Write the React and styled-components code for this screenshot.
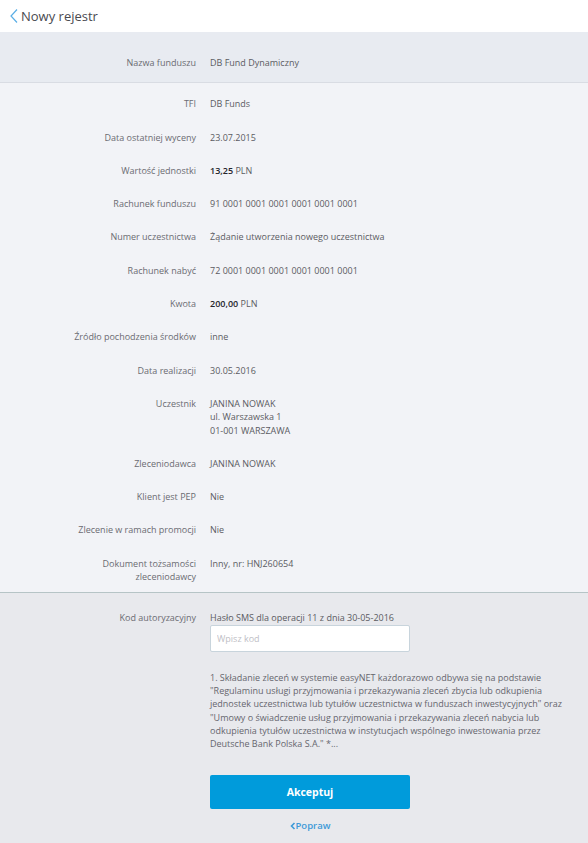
import React from "react";
import styled, { createGlobalStyle } from "styled-components";

const Global = createGlobalStyle`
  html, body { margin: 0; padding: 0; background: #e8e9ed; }
  body { font-family: "Open Sans", "Noto Sans", sans-serif; -webkit-font-smoothing: antialiased; }
  * { box-sizing: border-box; }
`;

const Page = styled.div`
  width: 588px;
  min-height: 843px;
  display: flex;
  flex-direction: column;
  background: #e8e9ed;
`;

const Header = styled.header`
  height: 32px;
  background: #ffffff;
  display: flex;
  align-items: center;
  padding-left: 9px;
  gap: 2px;
`;

const BackIcon = styled.svg`
  width: 10px;
  height: 16px;
  flex-shrink: 0;
`;

const Title = styled.h1`
  margin: 0;
  font-size: 13px;
  font-weight: 400;
  color: #4a4a50;
`;

const Section = styled.section`
  background: ${(p) => p.$bg};
  border-bottom: ${(p) => (p.$border ? `1px solid ${p.$border}` : "none")};
  padding: ${(p) => p.$pad};
  display: flex;
  flex-direction: column;
  gap: 20px;
`;

const Row = styled.div`
  display: grid;
  grid-template-columns: 196px 1fr;
  column-gap: 14px;
  font-size: 9px;
  line-height: 13.3px;
`;

const Label = styled.div`
  text-align: right;
  color: #6b6b72;
  padding-left: 40px;
`;

const Value = styled.div`
  color: #5b5b62;
  padding-right: 20px;
`;

const Strong = styled.span`
  color: #25252b;
  font-weight: 600;
`;

const Field = styled.div`
  display: flex;
  flex-direction: column;
`;

const Input = styled.input`
  width: 200px;
  height: 27px;
  border: 1px solid #c8d4dc;
  border-radius: 2px;
  background: #fff;
  padding: 0 6px;
  font-family: inherit;
  font-size: 9px;
  color: #333;
  outline: none;
  &::placeholder { color: #c0c0c6; }
`;

const Legal = styled.p`
  margin: 19px -12px 0 0;
  font-size: 9px;
  line-height: 13.3px;
  color: #66666d;
`;

const Actions = styled.div`
  width: 200px;
  margin-top: 25px;
  display: flex;
  flex-direction: column;
  align-items: center;
  gap: 10px;
`;

const Button = styled.button`
  width: 200px;
  height: 34px;
  border: none;
  border-radius: 2px;
  background: #009bdb;
  color: #fff;
  font-family: inherit;
  font-size: 10.5px;
  font-weight: 700;
  cursor: pointer;
`;

const BackLink = styled.a`
  font-size: 9.5px;
  font-weight: 600;
  color: #3d9ad8;
  text-decoration: none;
  display: flex;
  align-items: center;
`;

const rows = [
  ["TFI", "DB Funds"],
  ["Data ostatniej wyceny", "23.07.2015"],
  ["Wartość jednostki", <><Strong>13,25</Strong> PLN</>],
  ["Rachunek funduszu", "91 0001 0001 0001 0001 0001 0001"],
  ["Numer uczestnictwa", "Żądanie utworzenia nowego uczestnictwa"],
  ["Rachunek nabyć", "72 0001 0001 0001 0001 0001 0001"],
  ["Kwota", <><Strong>200,00</Strong> PLN</>],
  ["Źródło pochodzenia środków", "inne"],
  ["Data realizacji", "30.05.2016"],
  ["Uczestnik", <>JANINA NOWAK<br />ul. Warszawska 1<br />01-001 WARSZAWA</>],
  ["Zleceniodawca", "JANINA NOWAK"],
  ["Klient jest PEP", "Nie"],
  ["Zlecenie w ramach promocji", "Nie"],
  ["Dokument tożsamości zleceniodawcy", "Inny, nr: HNJ260654"],
];

export default function App() {
  return (
    <Page>
      <Global />
      <Header>
        <BackIcon viewBox="0 0 10 16">
          <path d="M8 1.5 L2 8 L8 14.5" fill="none" stroke="#5aaee6" strokeWidth="1.2" />
        </BackIcon>
        <Title>Nowy rejestr</Title>
      </Header>

      <Section $bg="#e8ebf1" $border="#d9dce3" $pad="24px 0 13px">
        <Row>
          <Label>Nazwa funduszu</Label>
          <Value>DB Fund Dynamiczny</Value>
        </Row>
      </Section>

      <Section $bg="#f2f3f7" $border="#b6c4c6" $pad="14px 0 9px">
        {rows.map(([l, v]) => (
          <Row key={l}>
            <Label>{l}</Label>
            <Value>{v}</Value>
          </Row>
        ))}
      </Section>

      <Section $bg="#e8e9ed" $pad="18px 0 20px">
        <Row>
          <Label>Kod autoryzacyjny</Label>
          <Value>
            <Field>
              <span>Hasło SMS dla operacji 11 z dnia 30-05-2016</span>
              <Input placeholder="Wpisz kod" />
            </Field>
            <Legal>
              1. Składanie zleceń w systemie easyNET każdorazowo odbywa się na podstawie "Regulaminu usługi
              przyjmowania i przekazywania zleceń zbycia lub odkupienia jednostek uczestnictwa lub tytułów
              uczestnictwa w funduszach inwestycyjnych" oraz "Umowy o świadczenie usług przyjmowania i
              przekazywania zleceń nabycia lub odkupienia tytułów uczestnictwa w instytucjach wspólnego
              inwestowania przez Deutsche Bank Polska S.A." *...
            </Legal>
            <Actions>
              <Button type="button">Akceptuj</Button>
              <BackLink href="#">
                <svg width="6" height="8" viewBox="0 0 6 8">
                  <path d="M4.5 1 L1.5 4 L4.5 7" fill="none" stroke="#3d9ad8" strokeWidth="1.6" />
                </svg>
                Popraw
              </BackLink>
            </Actions>
          </Value>
        </Row>
      </Section>
    </Page>
  );
}
